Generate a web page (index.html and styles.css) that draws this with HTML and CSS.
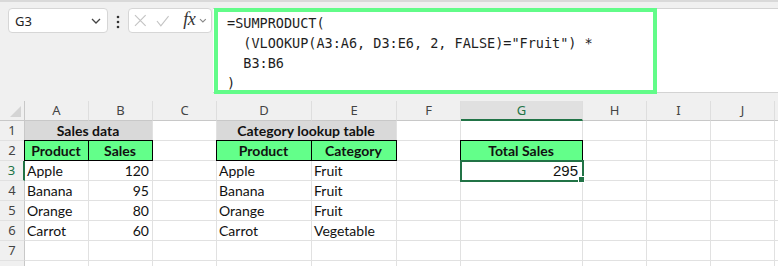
FILE: index.html
```html
<!DOCTYPE html>
<html lang="en">
<head>
    <meta charset="UTF-8">
    <meta name="viewport" content="width=device-width, initial-scale=1.0">
    <title>SUMPRODUCT with VLOOKUP</title>
    <link rel="stylesheet" href="styles.css">
</head>
<body>
    <div class="topline"></div>
    <div class="fbar">
        <div class="namebox">
            <span>G3</span>
            <svg class="chev" width="10" height="6" viewBox="0 0 10 6"><polyline points="1,1 5,5 9,1" fill="none" stroke="#444" stroke-width="1.3"/></svg>
        </div>
        <svg class="dots" width="4" height="14" viewBox="0 0 4 14"><circle cx="2" cy="2" r="1.3" fill="#333"/><circle cx="2" cy="7" r="1.3" fill="#333"/><circle cx="2" cy="12" r="1.3" fill="#333"/></svg>
        <div class="fxbox">
            <svg width="13" height="13" viewBox="0 0 13 13"><path d="M1 1 L12 12 M12 1 L1 12" stroke="#c4c4c4" stroke-width="1.2" fill="none"/></svg>
            <svg width="14" height="12" viewBox="0 0 14 12"><polyline points="1,6 5,11 13,1" stroke="#c4c4c4" stroke-width="1.2" fill="none"/></svg>
            <span class="fx">fx</span>
            <svg width="8" height="5" viewBox="0 0 8 5"><polyline points="1,1 4,4 7,1" fill="none" stroke="#888" stroke-width="1.1"/></svg>
        </div>
        <div class="formula">
            <div class="hl">
                <div class="ln">=SUMPRODUCT(</div>
                <div class="ln">  (VLOOKUP(A3:A6, D3:E6, 2, FALSE)="Fruit") *</div>
                <div class="ln">  B3:B6</div>
                <div class="ln">)</div>
            </div>
        </div>
    </div>

    <div class="sheet">
        <div class="ch corner"><span class="tri"></span></div>
        <div class="ch">A</div><div class="ch">B</div><div class="ch">C</div><div class="ch">D</div><div class="ch">E</div><div class="ch">F</div><div class="ch sel">G</div><div class="ch">H</div><div class="ch">I</div><div class="ch">J</div><div class="ch"></div>

        <div class="rh">1</div>
        <div class="c title span2">Sales data</div><div class="c"></div>
        <div class="c title span2">Category lookup table</div>
        <div class="c"></div><div class="c"></div><div class="c"></div><div class="c"></div><div class="c"></div><div class="c"></div>

        <div class="rh">2</div>
        <div class="c box">Product</div><div class="c box">Sales</div><div class="c"></div>
        <div class="c box">Product</div><div class="c box">Category</div><div class="c"></div>
        <div class="c box">Total Sales</div><div class="c"></div><div class="c"></div><div class="c"></div><div class="c"></div>

        <div class="rh sel">3</div>
        <div class="c">Apple</div><div class="c num">120</div><div class="c"></div>
        <div class="c">Apple</div><div class="c">Fruit</div><div class="c"></div>
        <div class="c num result active">295<span class="handle"></span></div><div class="c"></div><div class="c"></div><div class="c"></div><div class="c"></div>

        <div class="rh">4</div>
        <div class="c">Banana</div><div class="c num">95</div><div class="c"></div>
        <div class="c">Banana</div><div class="c">Fruit</div><div class="c"></div>
        <div class="c"></div><div class="c"></div><div class="c"></div><div class="c"></div><div class="c"></div>

        <div class="rh">5</div>
        <div class="c">Orange</div><div class="c num">80</div><div class="c"></div>
        <div class="c">Orange</div><div class="c">Fruit</div><div class="c"></div>
        <div class="c"></div><div class="c"></div><div class="c"></div><div class="c"></div><div class="c"></div>

        <div class="rh">6</div>
        <div class="c">Carrot</div><div class="c num">60</div><div class="c"></div>
        <div class="c">Carrot</div><div class="c">Vegetable</div><div class="c"></div>
        <div class="c"></div><div class="c"></div><div class="c"></div><div class="c"></div><div class="c"></div>

        <div class="rh">7</div>
        <div class="c"></div><div class="c"></div><div class="c"></div><div class="c"></div><div class="c"></div><div class="c"></div>
        <div class="c"></div><div class="c"></div><div class="c"></div><div class="c"></div><div class="c"></div>

        <div class="rh"></div>
        <div class="c"></div><div class="c"></div><div class="c"></div><div class="c"></div><div class="c"></div><div class="c"></div>
        <div class="c"></div><div class="c"></div><div class="c"></div><div class="c"></div><div class="c"></div>
    </div>
</body>
</html>
```

FILE: styles.css
```css
body { margin: 0; background: #f0f0f0; font-family: "Noto Sans", sans-serif; overflow: hidden; }
.topline { height: 2px; background: #d9d9d9; }

/* formula bar */
.fbar { display: flex; align-items: flex-start; padding: 6px 0 0 8px; height: 91px; box-sizing: border-box; }
.namebox { width: 100px; height: 25px; box-sizing: border-box; background: #fff; border: 1px solid #d6d6d6; border-radius: 4px; display: flex; align-items: center; justify-content: space-between; padding: 0 6px 0 6px; font-size: 13px; color: #222; }
.namebox .chev { margin-top: 1px; }
.dots { margin: 7px 8px 0 8px; }
.fxbox { width: 84px; height: 25px; box-sizing: border-box; background: #fff; border: 1px solid #d6d6d6; border-radius: 4px; display: flex; align-items: center; gap: 9px; padding: 0 4px 0 5px; }
.fxbox .fx { font-family: "Liberation Serif", serif; font-style: italic; font-size: 18px; color: #333; margin: -2px -5px 0 5px; letter-spacing: -0.5px; }
.formula { flex: 1; height: 85px; box-sizing: border-box; margin: 0 0 0 1px; background: #fff; border-top: 1px solid #d3d3d3; border-bottom: 1px solid #d3d3d3; }
.hl { width: 443px; height: 86px; box-sizing: border-box; margin: -1px 0 0 1px; border: 4px solid #62fc89; padding: 1px 0 0 9px; font-family: "DejaVu Sans Mono", monospace; font-size: 13.5px; line-height: 20px; color: #1e1e1e; }
.ln { white-space: pre; }

/* sheet */
.sheet { margin-top: 8px; display: grid; grid-template-columns: 25px 64px 64px 64px 95px 85px 64px 122px 64px 64px 64px 1fr; grid-auto-rows: 20px; background: #fff; font-family: Lato, sans-serif; font-size: 14px; color: #111; }
.ch { background: #f0f0f0; border-right: 1px solid #dedede; border-bottom: 1px solid #c8c8c8; box-sizing: border-box; text-align: center; font-family: "Noto Sans", sans-serif; font-size: 13px; line-height: 19px; color: #444; }
.ch.sel { background: #e0e0e0; color: #217346; border-bottom: 2px solid #217346; }
.corner { position: relative; border-right-color: #c8c8c8; }
.tri { position: absolute; right: 3px; bottom: 3px; width: 0; height: 0; border-left: 11px solid transparent; border-bottom: 11px solid #d4d4d4; }
.rh { background: #f0f0f0; border-right: 1px solid #c8c8c8; border-bottom: 1px solid #e1e1e1; box-sizing: border-box; text-align: center; font-family: "Noto Sans", sans-serif; font-size: 13px; line-height: 19px; color: #444; }
.rh.sel { color: #217346; border-right: 2px solid #217346; }
.c { border-right: 1px solid #e1e1e1; border-bottom: 1px solid #e1e1e1; box-sizing: border-box; padding: 0 3px 0 2px; line-height: 19px; white-space: nowrap; overflow: hidden; }
.span2 { grid-column: span 2; }
.num { text-align: right; }
.title { background: #d9d9d9; font-weight: bold; text-align: center; }
.box { margin: -1px 0 0 -1px; border: 1px solid #000; background: #63ff8a; font-weight: bold; text-align: center; }
.result { font-family: "Liberation Sans Narrow", "Liberation Sans", sans-serif; font-size: 15px; padding-right: 4px; }
.active { position: relative; overflow: visible; outline: 2px solid #217346; outline-offset: -1px; }
.handle { position: absolute; right: -3px; bottom: -3px; width: 5px; height: 5px; background: #217346; border: 1px solid #fff; }
```
